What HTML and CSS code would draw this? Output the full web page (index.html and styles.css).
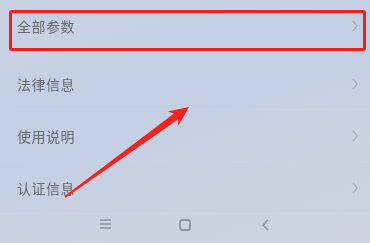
FILE: index.html
```html
<!DOCTYPE html>
<html lang="zh-CN">
<head>
<meta charset="utf-8">
<title>设置</title>
<link rel="stylesheet" href="styles.css">
</head>
<body>
<div class="screen">
  <div class="list">
    <div class="row highlight">
      <span class="label">全部参数</span>
      <svg class="chev" viewBox="0 0 6 12" width="6" height="12"><path d="M0.7 0.7 L5.2 6 L0.7 11.3" fill="none" stroke="#a3acbb" stroke-width="1.2"/></svg>
    </div>
    <div class="row">
      <span class="label">法律信息</span>
      <svg class="chev" viewBox="0 0 6 12" width="6" height="12"><path d="M0.7 0.7 L5.2 6 L0.7 11.3" fill="none" stroke="#a3acbb" stroke-width="1.2"/></svg>
    </div>
    <div class="row">
      <span class="label">使用说明</span>
      <svg class="chev" viewBox="0 0 6 12" width="6" height="12"><path d="M0.7 0.7 L5.2 6 L0.7 11.3" fill="none" stroke="#a3acbb" stroke-width="1.2"/></svg>
    </div>
    <div class="row">
      <span class="label">认证信息</span>
      <svg class="chev" viewBox="0 0 6 12" width="6" height="12"><path d="M0.7 0.7 L5.2 6 L0.7 11.3" fill="none" stroke="#a3acbb" stroke-width="1.2"/></svg>
    </div>
  </div>
  <div class="nav">
    <svg class="nav-icon" viewBox="0 0 11 10" width="11" height="10"><path d="M0 1 H11 M0 5 H11 M0 9 H11" stroke="#8c93a0" stroke-width="1.6"/></svg>
    <svg class="nav-icon" viewBox="0 0 12 12" width="12" height="12"><rect x="1" y="1" width="10" height="10" rx="2" fill="none" stroke="#8c93a0" stroke-width="1.8"/></svg>
    <svg class="nav-icon" viewBox="0 0 7 12" width="7" height="12"><path d="M6 0.8 L1.2 6 L6 11.2" fill="none" stroke="#8c93a0" stroke-width="1.6"/></svg>
  </div>
  <svg class="annot" viewBox="0 0 370 243" width="370" height="243">
    <polygon points="64.4,196.2 174.0,113.6 167.5,111.4 189,107 178.1,126.0 178.2,119.2 65.6,197.8" fill="#f2221f"/>
  </svg>
</div>
</body>
</html>
```
FILE: styles.css
```css
html, body {
  margin: 0;
  padding: 0;
}
body {
  width: 370px;
  height: 243px;
  overflow: hidden;
  font-family: "Noto Sans CJK SC", "Noto Sans", sans-serif;
}
.screen {
  position: relative;
  width: 370px;
  height: 243px;
  background: linear-gradient(160deg, #c8d1e2 0%, #c4cfe4 45%, #cbd2df 75%, #ccd3df 100%);
  display: flex;
  flex-direction: column;
}
.list {
  display: flex;
  flex-direction: column;
  padding-top: 10px;
}
.row {
  height: 52px;
  display: flex;
  align-items: center;
  justify-content: space-between;
  padding: 0 12px 0 17px;
  box-sizing: border-box;
  border-bottom: 1px solid rgba(255, 255, 255, 0.06);
}
.row.highlight {
  height: 41px;
  margin: 0 4px 7px 9px;
  padding: 0 5px 9px 5px;
  border: 3px solid #f51c1c;
  border-radius: 3px;
}
.label {
  font-size: 14px;
  color: #656a74;
  letter-spacing: 0.5px;
  line-height: 1;
  filter: blur(0.25px);
}
.chev {
  display: block;
}
.nav {
  flex: 1;
  display: grid;
  grid-template-columns: 80px 80px 80px;
  justify-content: center;
  justify-items: center;
  align-items: start;
  padding-top: 4px;
}
.nav-icon {
  display: block;
  margin-top: 1px;
}
.annot {
  position: absolute;
  left: 0;
  top: 0;
  pointer-events: none;
}
```
